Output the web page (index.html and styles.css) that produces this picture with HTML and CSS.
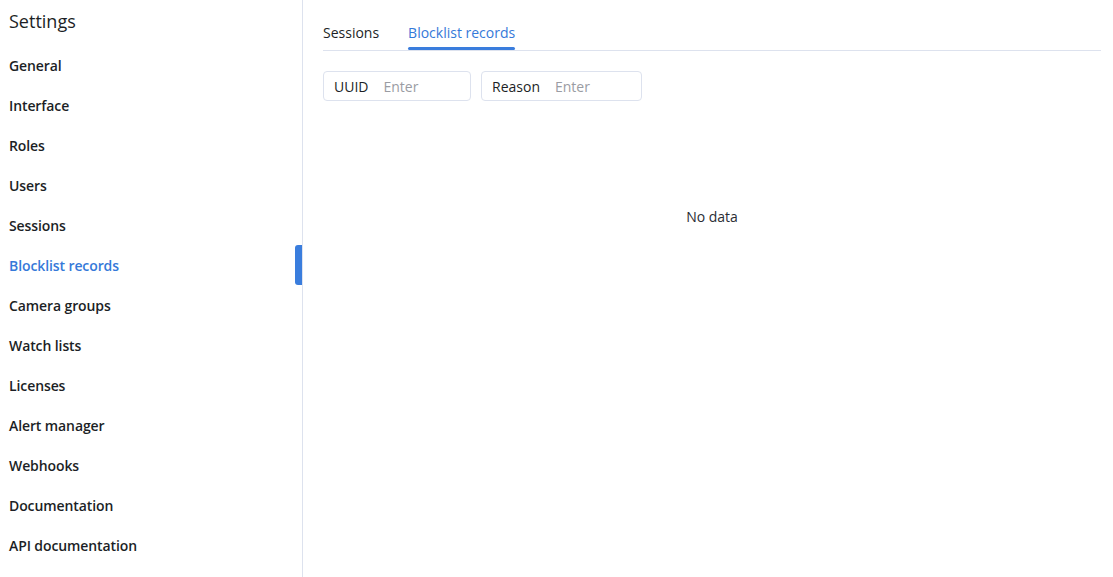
FILE: index.html
```html
<!DOCTYPE html>
<html>
<head>
<meta charset="utf-8">
<link rel="stylesheet" href="styles.css">
</head>
<body>
<div class="app">
  <aside class="sidebar">
    <h1 class="title">Settings</h1>
    <nav class="nav">
      <a class="nav-item">General</a>
      <a class="nav-item">Interface</a>
      <a class="nav-item">Roles</a>
      <a class="nav-item">Users</a>
      <a class="nav-item">Sessions</a>
      <a class="nav-item active">Blocklist records</a>
      <a class="nav-item">Camera groups</a>
      <a class="nav-item">Watch lists</a>
      <a class="nav-item">Licenses</a>
      <a class="nav-item">Alert manager</a>
      <a class="nav-item">Webhooks</a>
      <a class="nav-item">Documentation</a>
      <a class="nav-item">API documentation</a>
    </nav>
  </aside>
  <main class="main">
    <div class="tabs">
      <div class="tab">Sessions</div>
      <div class="tab active">Blocklist records</div>
    </div>
    <div class="filters">
      <label class="field field-uuid"><span class="field-label">UUID</span><span class="field-ph">Enter</span></label>
      <label class="field field-reason"><span class="field-label">Reason</span><span class="field-ph">Enter</span></label>
    </div>
    <div class="empty">No data</div>
  </main>
</div>
</body>
</html>
```

FILE: styles.css
```css
* { box-sizing: border-box; }
html, body { margin: 0; padding: 0; background: #fff; }
body {
  font-family: "Open Sans", "Noto Sans", sans-serif;
  color: #1c1f26;
  width: 1113px;
  height: 577px;
  overflow: hidden;
}
.app { display: flex; height: 577px; }
.sidebar {
  width: 303px;
  flex: none;
  border-right: 1px solid #dde2ee;
  padding-top: 8px;
}
.title {
  margin: 0 0 0 9px;
  font-size: 18px;
  font-weight: 500;
  line-height: 26px;
  color: #1c1f26;
}
.nav { display: flex; flex-direction: column; margin-top: 11px; }
.nav-item {
  position: relative;
  display: flex;
  align-items: center;
  height: 40px;
  padding-left: 9px;
  font-size: 14px;
  font-weight: 600;
  letter-spacing: -0.1px;
  color: #1c1f26;
}
.nav-item.active { color: #3579d9; }
.nav-item.active::after {
  content: "";
  position: absolute;
  right: 0;
  top: 0;
  width: 7px;
  height: 40px;
  background: #3a7ddd;
  border-radius: 3px 0 0 3px;
}
.main { flex: 1; padding: 0 12px 0 20px; display: flex; flex-direction: column; }
.tabs {
  display: flex;
  gap: 29px;
  height: 51px;
  border-bottom: 1px solid #dde2ee;
  padding-top: 23px;
}
.tab {
  font-size: 14px;
  color: #1c1f26;
  line-height: 20px;
  height: 27px;
  position: relative;
}
.tab.active { color: #3579d9; }
.tab.active::after {
  content: "";
  position: absolute;
  left: 0; right: 0; bottom: 0;
  height: 3px;
  background: #3a7ddd;
  border-radius: 2px;
}
.filters { display: flex; gap: 10px; margin-top: 20px; }
.field {
  display: flex;
  align-items: center;
  gap: 15px;
  height: 30px;
  border: 1px solid #dde2ee;
  border-radius: 4px;
  padding: 0 10px;
  font-size: 14px;
}
.field-uuid { width: 148px; }
.field-reason { width: 161px; }
.field-label { color: #1c1f26; font-weight: 500; }
.field-ph { color: #9a9ca3; }
.empty {
  margin-top: 106px;
  text-align: center;
  font-size: 14px;
  color: #2a2d33;
}
```
